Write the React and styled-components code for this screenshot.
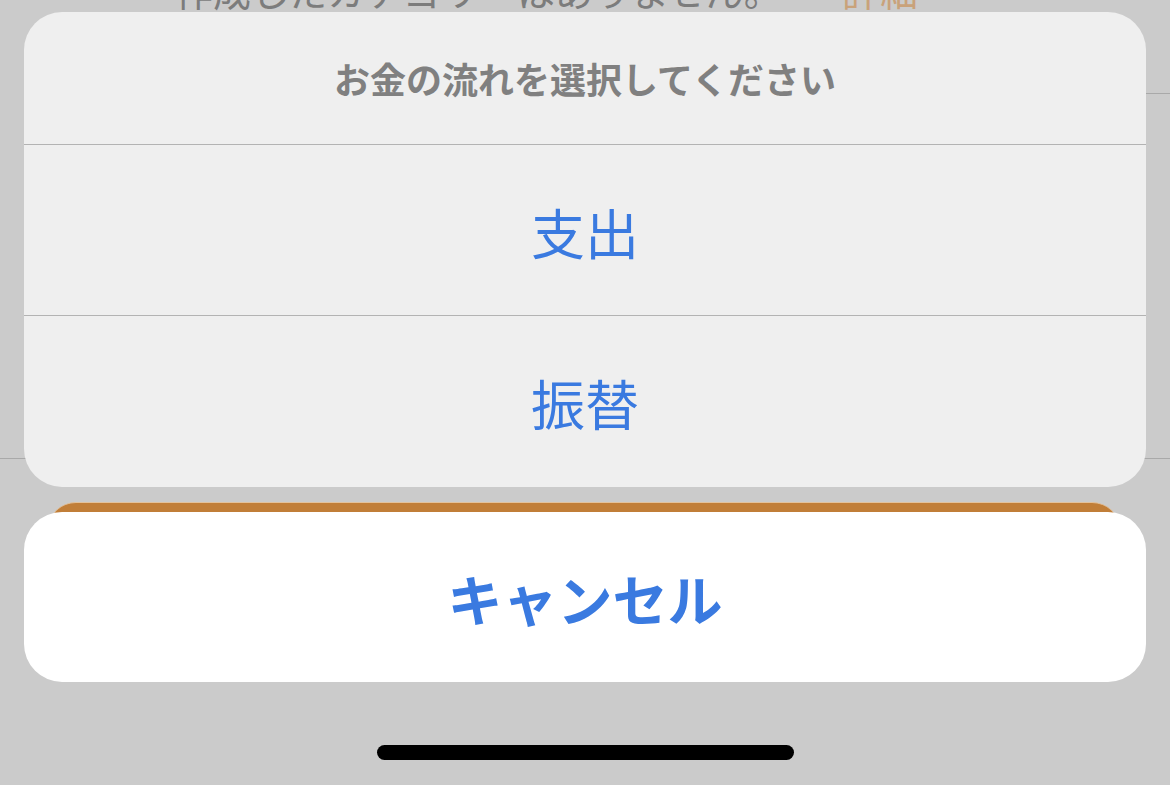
import styled, { createGlobalStyle } from "styled-components";

const GlobalStyle = createGlobalStyle`
  html, body {
    margin: 0;
    padding: 0;
    background: #cbcbcb;
  }
  body {
    font-family: "Noto Sans CJK JP", "Noto Sans", sans-serif;
  }
`;

const Screen = styled.div`
  position: relative;
  width: 1170px;
  height: 785px;
  overflow: hidden;
  background: #cbcbcb;
`;

// page underneath the dimmed overlay
const Behind = styled.div`
  display: flex;
  flex-direction: column;
`;

const HintText = styled.p`
  margin: -30px 0 0 175px;
  font-size: 38px;
  line-height: 40px;
  color: #7c7c7c;
  white-space: nowrap;
`;

const HintLink = styled.span`
  color: #c9a27a;
  margin-left: 60px;
`;

const Rule = styled.div`
  height: 1px;
  background: #a9a9a9;
  margin-top: ${(p) => p.$top}px;
  margin-left: ${(p) => p.$indent || 0}px;
`;

const SaveButton = styled.div`
  margin: 43px 50px 0 48px;
  height: 120px;
  border-radius: 28px;
  background: #c17e38;
  border-top: 1px solid #e3c29c;
`;

// action sheet on top
const Overlay = styled.div`
  position: absolute;
  inset: 0;
  padding: 12px 24px 0;
  display: flex;
  flex-direction: column;
  gap: 25px;
`;

const Group = styled.div`
  background: #efefef;
  border-radius: 38px;
  overflow: hidden;
  display: flex;
  flex-direction: column;
`;

const Title = styled.div`
  height: 132px;
  display: flex;
  align-items: center;
  justify-content: center;
  font-size: 36px;
  font-weight: 700;
  color: #808080;
  border-bottom: 1px solid #b3b3b3;
`;

const Action = styled.div`
  height: 171px;
  display: flex;
  align-items: center;
  justify-content: center;
  font-size: 54px;
  font-weight: 400;
  color: #3a7ae0;
  border-bottom: ${(p) => (p.$last ? "none" : "1px solid #b3b3b3")};
  padding-top: 2px;
  box-sizing: border-box;
`;

const Cancel = styled.div`
  height: 170px;
  background: #ffffff;
  border-radius: 38px;
  display: flex;
  align-items: center;
  justify-content: center;
  font-size: 55px;
  font-weight: 700;
  color: #3a7ae0;
`;

const HomeBar = styled.div`
  align-self: center;
  width: 417px;
  height: 15px;
  border-radius: 8px;
  background: #000;
  margin-top: 38px;
`;

export default function App() {
  return (
    <Screen>
      <GlobalStyle />
      <Behind>
        <HintText>
          作成したカテゴリーはありません。
          <HintLink>詳細</HintLink>
        </HintText>
        <Rule $top={83} $indent={400} />
        <Rule $top={364} />
        <SaveButton />
      </Behind>
      <Overlay>
        <Group>
          <Title>お金の流れを選択してください</Title>
          <Action>支出</Action>
          <Action $last>振替</Action>
        </Group>
        <Cancel>キャンセル</Cancel>
        <HomeBar />
      </Overlay>
    </Screen>
  );
}
